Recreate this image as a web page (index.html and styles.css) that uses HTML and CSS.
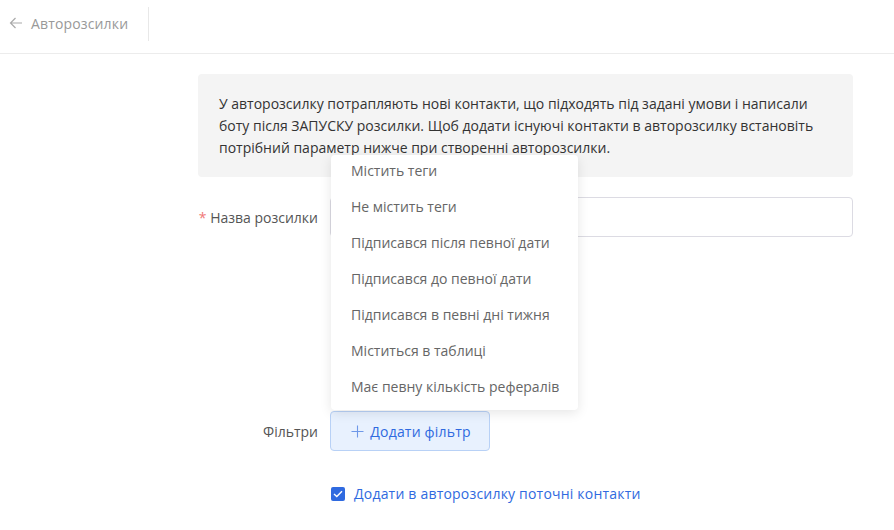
FILE: index.html
```html
<!DOCTYPE html>
<html lang="uk">
<head>
  <meta charset="UTF-8">
  <title>Авторозсилки</title>
  <link rel="stylesheet" href="styles.css">
</head>
<body>
  <!-- Шапка -->
  <header class="topbar">
    <a class="back-link" href="#">
      <svg class="back-icon" width="14" height="14" viewBox="0 0 14 14">
        <path d="M13 7H1.5M6.5 2L1.5 7l5 5" fill="none" stroke="currentColor" stroke-width="1.2"/>
      </svg>
      Авторозсилки
    </a>
    <span class="topbar-divider"></span>
  </header>

  <main class="content">
    <div class="info-box">
      У авторозсилку потрапляють нові контакти, що підходять під задані умови і написали
      боту після ЗАПУСКУ розсилки. Щоб додати існуючі контакти в авторозсилку встановіть
      потрібний параметр нижче при створенні авторозсилки.
    </div>

    <div class="form-row">
      <label class="form-label"><span class="required">*</span> Назва розсилки</label>
      <div class="form-control">
        <input class="text-input" type="text">
      </div>
    </div>

    <div class="form-row filters-row">
      <label class="form-label">Фільтри</label>
      <div class="form-control">
        <ul class="dropdown">
          <li>Містить теги</li>
          <li>Не містить теги</li>
          <li>Підписався після певної дати</li>
          <li>Підписався до певної дати</li>
          <li>Підписався в певні дні тижня</li>
          <li>Міститься в таблиці</li>
          <li>Має певну кількість рефералів</li>
        </ul>
        <button class="add-filter" type="button">
          <svg class="plus" width="13" height="13" viewBox="0 0 13 13">
            <path d="M6.5 0.5v12M0.5 6.5h12" fill="none" stroke="currentColor" stroke-width="1.1"/>
          </svg>
          Додати фільтр
        </button>
      </div>
    </div>

    <div class="form-row check-row">
      <span class="form-label"></span>
      <label class="check">
        <span class="check-box">
          <svg width="10" height="8" viewBox="0 0 10 8">
            <path d="M1 4l2.8 2.6L9 1.2" fill="none" stroke="#fff" stroke-width="1.4"/>
          </svg>
        </span>
        Додати в авторозсилку поточні контакти
      </label>
    </div>
  </main>
</body>
</html>
```

FILE: styles.css
```css
body {
  margin: 0;
  font-family: "Open Sans", "Noto Sans", sans-serif;
  font-size: 14px;
  color: #333;
  background: #fff;
}

.topbar {
  height: 53px;
  border-bottom: 1px solid #ececec;
  display: flex;
  align-items: flex-start;
}

.back-link {
  display: flex;
  align-items: center;
  gap: 8px;
  height: 46px;
  padding-left: 9px;
  color: #999;
  text-decoration: none;
  letter-spacing: 0.15px;
}

.back-icon {
  color: #aaa;
}

.topbar-divider {
  width: 1px;
  height: 34px;
  margin-top: 7px;
  margin-left: 20px;
  background: #e8e8e8;
}

.content {
  padding: 20px 41px 0 198px;
}

.info-box {
  background: #f4f4f4;
  border-radius: 4px;
  padding: 19px 21px 18px;
  line-height: 22px;
  color: #333;
}

.form-row {
  display: flex;
  align-items: center;
  margin-top: 20px;
}

.form-label {
  width: 120px;
  flex: none;
  text-align: right;
  margin-right: 12px;
  color: #555;
}

.required {
  color: #f07878;
}

.form-control {
  flex: 1;
  position: relative;
}

.text-input {
  box-sizing: border-box;
  width: 100%;
  height: 40px;
  border: 1px solid #dcdbe3;
  border-radius: 4px;
  font: inherit;
  display: block;
}

.filters-row {
  margin-top: 174px;
}

.add-filter {
  box-sizing: border-box;
  width: 160px;
  height: 40px;
  background: #e8f1fe;
  border: 1px solid #b8d1f6;
  border-radius: 4px;
  color: #2f6ae0;
  font: inherit;
  font-size: 14px;
  letter-spacing: 0.2px;
  display: flex;
  align-items: center;
  justify-content: center;
  gap: 6px;
  padding: 0 0 0 2px;
}

.plus {
  color: #6e98e8;
}

.dropdown {
  position: absolute;
  left: 1px;
  bottom: 41px;
  width: 247px;
  margin: 0;
  padding: 0 0 3px;
  list-style: none;
  background: #fff;
  border-radius: 4px;
  box-shadow: 0 3px 12px rgba(0, 0, 0, 0.1);
  z-index: 5;
}

.dropdown li {
  height: 36px;
  line-height: 32px;
  padding-left: 20px;
  color: #666;
}

.check-row {
  margin-top: 32px;
}

.check {
  display: flex;
  align-items: center;
  gap: 9px;
  margin-left: 1px;
  color: #2f6ae0;
  line-height: 22px;
  letter-spacing: 0.2px;
}

.check-box {
  width: 14px;
  height: 14px;
  border-radius: 2px;
  background: #2f6ae0;
  display: flex;
  align-items: center;
  justify-content: center;
}
```
